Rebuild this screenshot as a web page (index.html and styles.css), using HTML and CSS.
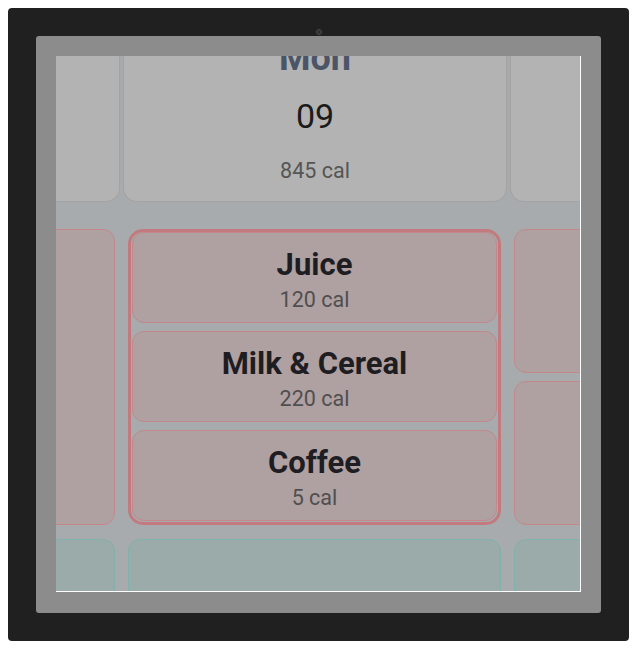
FILE: index.html
```html
<!DOCTYPE html>
<html lang="en">
<head>
<meta charset="utf-8">
<title>Meal planner</title>
<link rel="stylesheet" href="styles.css">
</head>
<body>
<div class="device">
  <div class="bezel-top"><span class="camera"></span></div>
  <div class="frame">
    <div class="screen">
      <div class="scroller">
        <div class="day-row">
          <div class="day-cell"></div>
          <div class="day-cell">
            <div class="day-name">Mon</div>
            <div class="day-num">09</div>
            <div class="day-cal">845 cal</div>
          </div>
          <div class="day-cell"></div>
        </div>
        <div class="meal-row meal-row--breakfast">
          <div class="slot slot--red"></div>
          <div class="slot-group">
            <div class="meal">
              <div class="meal-name">Juice</div>
              <div class="meal-cal">120 cal</div>
            </div>
            <div class="meal">
              <div class="meal-name">Milk &amp; Cereal</div>
              <div class="meal-cal">220 cal</div>
            </div>
            <div class="meal">
              <div class="meal-name">Coffee</div>
              <div class="meal-cal">5 cal</div>
            </div>
          </div>
          <div class="slot-stack">
            <div class="slot slot--red"></div>
            <div class="slot slot--red"></div>
          </div>
        </div>
        <div class="meal-row meal-row--lunch">
          <div class="slot slot--teal"></div>
          <div class="slot slot--teal"></div>
          <div class="slot slot--teal"></div>
        </div>
      </div>
    </div>
  </div>
</div>
</body>
</html>
```
FILE: styles.css
```css
* { box-sizing: border-box; }
html, body { margin: 0; padding: 0; background: #ffffff; }
body { font-family: Roboto, "Liberation Sans", sans-serif; }

.device {
  margin: 8px 0 0 8px;
  width: 621px;
  height: 633px;
  background: #202020;
  border-radius: 4px;
  padding: 0 28px 28px;
}
.bezel-top {
  height: 28px;
  display: flex;
  justify-content: center;
  align-items: flex-end;
  padding-bottom: 1px;
}
.camera {
  width: 6px;
  height: 6px;
  border-radius: 50%;
  background: #2e2e2e;
  border: 1px solid #4a4a4a;
}
.frame {
  background: #8c8c8c;
  border-radius: 3px;
  padding: 20px 20px 21px 20px;
  height: 577px;
}
.screen {
  width: 525px;
  height: 536px;
  overflow: hidden;
  background: #a8abad;
  border-right: 1px solid #ffffff;
  border-bottom: 1px solid #ffffff;
}
.scroller {
  width: 1300px;
  margin-left: -356px;
  margin-top: -32px;
  display: flex;
  flex-direction: column;
}

.day-row {
  display: flex;
  gap: 3px;
  padding-left: 36px;
}
.day-cell {
  flex: none;
  width: 384px;
  height: 178px;
  background: #b3b3b3;
  border: 1px solid #a3a3a3;
  border-top: none;
  border-radius: 0 0 14px 14px;
  padding: 12px 0 19px;
  display: flex;
  flex-direction: column;
  align-items: center;
}
.day-name {
  font-size: 36px;
  line-height: 44px;
  font-weight: 700;
  color: #4b5567;
}
.day-num {
  margin-top: 16px;
  font-size: 34px;
  line-height: 40px;
  color: #1b1b1b;
}
.day-cal {
  margin-top: 22px;
  font-size: 21.5px;
  line-height: 26px;
  color: #555555;
}

.meal-row {
  display: grid;
  grid-template-columns: 373px 373px 373px;
  column-gap: 13px;
  padding-left: 42px;
}
.meal-row--breakfast { margin-top: 27px; height: 296px; }
.meal-row--lunch { margin-top: 14px; height: 90px; }

.slot {
  border-radius: 12px;
  border: 1px solid transparent;
}
.slot--red { background: #afa0a2; border-color: #c4888b; }
.slot--teal { background: #9aaba9; border-color: #80b1ac; }

.slot-stack {
  display: flex;
  flex-direction: column;
  gap: 8px;
}
.slot-stack .slot { flex: 1; }

.slot-group {
  border: 3px solid #c27a7e;
  border-radius: 15px;
  padding: 0 1px 1px;
  display: flex;
  flex-direction: column;
  gap: 8px;
}
.meal {
  height: 91px;
  background: #afa0a2;
  border: 1px solid #c3888b;
  border-radius: 12px;
  display: flex;
  flex-direction: column;
  align-items: center;
  justify-content: center;
  padding-top: 3px;
}
.meal-name {
  font-size: 31px;
  line-height: 36px;
  font-weight: 700;
  color: #1e1d22;
}
.meal-cal {
  margin-top: 4px;
  font-size: 21.5px;
  line-height: 25px;
  color: #4f4f4f;
}
```
